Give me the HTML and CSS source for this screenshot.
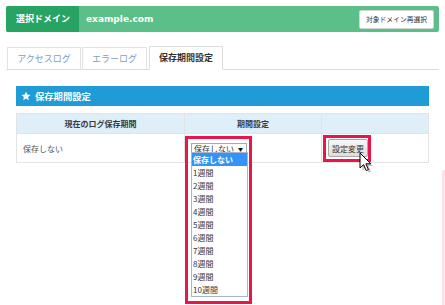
FILE: index.html
```html
<!DOCTYPE html>
<html lang="ja">
<head>
<meta charset="utf-8">
<link rel="stylesheet" href="styles.css">
</head>
<body>
<div class="page">
  <div class="domainbar">
    <div class="dlabel">選択ドメイン</div>
    <div class="dname">example.com</div>
    <button class="reselect">対象ドメイン再選択</button>
  </div>
  <div class="tabs">
    <div class="tab">アクセスログ</div>
    <div class="tab">エラーログ</div>
    <div class="tab active">保存期間設定</div>
  </div>
  <div class="section">
    <div class="sectitle">
      <svg class="star" width="10" height="10" viewBox="0 0 24 24"><path d="M12 1.5l3.1 7.1 7.7.7-5.8 5.1 1.7 7.6L12 18l-6.7 4 1.7-7.6-5.8-5.1 7.7-.7z" fill="#fff"/></svg>
      <span>保存期間設定</span>
    </div>
    <table class="grid">
      <tr class="head">
        <th class="c1">現在のログ保存期間</th>
        <th class="c2">期間設定</th>
        <th class="c3"></th>
      </tr>
      <tr class="body">
        <td class="cur">保存しない</td>
        <td class="selcell">
          <div class="sel"><span>保存しない</span><span class="arrow">▼</span></div>
          <ul class="opts">
            <li class="on">保存しない</li>
            <li>1週間</li>
            <li>2週間</li>
            <li>3週間</li>
            <li>4週間</li>
            <li>5週間</li>
            <li>6週間</li>
            <li>7週間</li>
            <li>8週間</li>
            <li>9週間</li>
            <li>10週間</li>
          </ul>
          <div class="hl hl-sel"></div>
        </td>
        <td class="btncell">
          <button class="apply">設定変更</button>
          <div class="hl hl-btn"></div>
          <svg class="cursor" width="16" height="22" viewBox="0 0 16 22"><path d="M2.5 3.5 L3.5 18.5 L7 15 L9.5 20.5 L12 19.5 L9.5 14 L14 14 Z" fill="#000" opacity=".25"/><path d="M1 1 L1 16 L4.6 12.6 L7.2 18.6 L9.4 17.6 L6.9 11.8 L11.8 11.8 Z" fill="#fff" stroke="#000" stroke-width="1" stroke-linejoin="round"/></svg>
        </td>
      </tr>
    </table>
  </div>
  <div class="pinkline"></div>
</div>
</body>
</html>
```

FILE: styles.css
```css
* { box-sizing: border-box; }
html, body { margin: 0; padding: 0; }
body {
  width: 445px;
  height: 305px;
  overflow: hidden;
  background: #fff;
  font-family: "Noto Sans CJK JP", "Noto Sans", sans-serif;
  color: #333;
}
.page {
  position: relative;
  padding: 6px 6px 0 6px;
  height: 305px;
}
.domainbar {
  display: flex;
  align-items: center;
  height: 26px;
  background: #5cbf89;
  border-radius: 2px;
}
.dlabel {
  width: 73px;
  height: 26px;
  background: #28a462;
  color: #fff;
  font-weight: bold;
  font-size: 9px;
  line-height: 26px;
  padding-left: 10px;
  border-radius: 2px 0 0 2px;
}
.dname {
  flex: 1;
  color: #fff;
  font-family: "DejaVu Sans", sans-serif;
  font-weight: bold;
  font-size: 9px;
  padding-left: 7px;
}
.reselect {
  width: 75px;
  height: 19px;
  margin-right: 5px;
  padding: 0;
  background: #fff;
  border: 1px solid #cfd8d2;
  border-radius: 2px;
  font-family: inherit;
  font-size: 6.8px;
  color: #333;
}
.tabs {
  display: flex;
  align-items: flex-end;
  gap: 1px;
  margin-top: 14px;
  padding-left: 1px;
  height: 24px;
  border-bottom: 1px solid #ddd;
}
.tab {
  height: 23px;
  margin-bottom: -1px;
  border: 1px solid #e2e2e2;
  border-bottom: 1px solid #ddd;
  background: #fff;
  color: #7a9fc2;
  font-size: 9px;
  line-height: 21px;
  text-align: center;
}
.tab:nth-child(1) { width: 74px; }
.tab:nth-child(2) { width: 65px; margin-left: 0; }
.tab.active {
  width: 74px;
  height: 24px;
  margin-left: 1px;
  border-color: #ddd;
  border-bottom-color: #fff;
  color: #333;
  font-weight: bold;
  line-height: 22px;
}
.section {
  margin: 16px 10px 0 10px;
}
.sectitle {
  display: flex;
  align-items: center;
  gap: 4px;
  height: 20px;
  padding-left: 5px;
  background: #1f9bd6;
  color: #fff;
  font-weight: bold;
  font-size: 9.3px;
}
.star { display: block; }
.grid {
  width: 100%;
  margin-top: 7px;
  border-collapse: collapse;
  font-size: 8px;
}
.grid th, .grid td {
  border: 1px solid #e3e3e3;
  padding: 0;
}
.grid th {
  height: 20px;
  background: #dfeff9;
  font-weight: bold;
  color: #3a3a3a;
}
.c1 { width: 168px; }
.c2 { width: 137px; }
.grid td {
  height: 29px;
  vertical-align: middle;
  color: #555;
}
.cur { padding-left: 6px !important; }
.selcell, .btncell { position: relative; }
.selcell { padding-left: 6px !important; }
.sel {
  display: flex;
  align-items: center;
  justify-content: space-between;
  width: 56px;
  height: 11px;
  padding: 0 3px 0 2px;
  border: 1px solid #a9a9a9;
  background: #fff;
  color: #333;
  font-size: 8px;
  line-height: 9px;
}
.arrow { font-size: 5px; color: #111; }
.opts {
  position: absolute;
  left: 6px;
  top: 18px;
  width: 57px;
  margin: 0;
  padding: 0;
  list-style: none;
  border: 1px solid #a5b6d4;
  background: #fff;
  z-index: 2;
}
.opts li {
  height: 13px;
  line-height: 13px;
  padding-left: 1px;
  font-size: 8px;
  color: #333;
}
.opts li.on {
  background: #3494f5;
  color: #fff;
  font-weight: bold;
}
.hl {
  position: absolute;
  border: 3px solid #e8174b;
  z-index: 3;
  pointer-events: none;
}
.hl-sel {
  left: 0px;
  top: 2px;
  width: 67px;
  height: 168px;
}
.btncell { padding-left: 6px !important; }
.apply {
  width: 40px;
  height: 18px;
  padding: 0;
  border: 1px solid #a8a8a8;
  border-radius: 2px;
  background: linear-gradient(#f7f7f7, #dedede);
  font-family: inherit;
  font-size: 8px;
  color: #333;
}
.hl-btn {
  left: 1px;
  top: 1px;
  width: 48px;
  height: 27px;
}
.cursor {
  position: absolute;
  left: 37px;
  top: 18px;
  z-index: 4;
}
.pinkline {
  position: absolute;
  right: 0;
  top: 170px;
  width: 3px;
  height: 135px;
  background: #fde2ec;
}
```
